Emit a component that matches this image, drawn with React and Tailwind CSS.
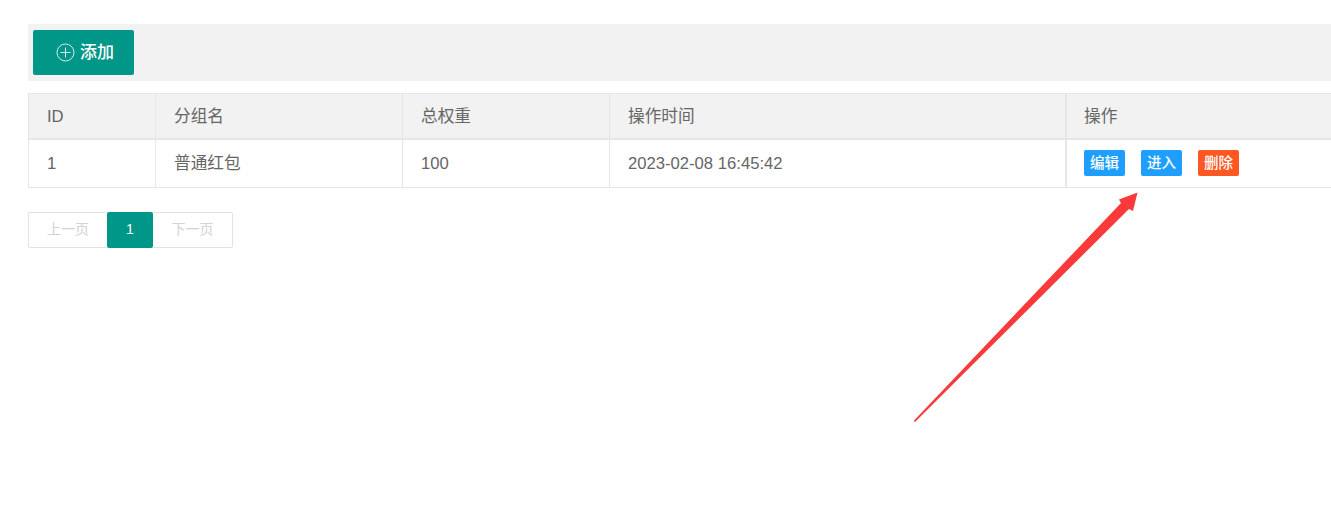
const cell = "border-r border-[#e6e6e6] px-[18px] pt-[2px]";

const App = () => {
  return (
    <div className="relative h-[511px] w-[1331px] overflow-hidden bg-white pl-[28px] pt-[24px] font-['Liberation_Sans','Noto_Sans_CJK_SC',sans-serif] text-[#666]">
      {/* Toolbar */}
      <div className="flex h-[57px] items-start bg-[#f2f2f2] pl-[5px] pt-[6px]">
        <button className="flex h-[45px] w-[101px] items-center justify-center gap-[5px] rounded-[2px] bg-[#009688] pl-[3px] text-[17px] font-medium text-white">
          <svg width="19" height="19" viewBox="0 0 19 19" fill="none" stroke="currentColor" strokeWidth="1" opacity="0.85">
            <circle cx="9.5" cy="9.5" r="8.5" />
            <path d="M9.5 4.5v10M4.5 9.5h10" />
          </svg>
          添加
        </button>
      </div>

      {/* Table */}
      <div className="mt-[12px] border-y border-l border-[#e6e6e6] text-[16.65px]">
        <div className="flex h-[46px] items-center border-b-2 border-[#e6e6e6] bg-[#f2f2f2]">
          <div className={`${cell} flex h-full w-[127px] items-center`}>ID</div>
          <div className={`${cell} flex h-full w-[247px] items-center`}>分组名</div>
          <div className={`${cell} flex h-full w-[207px] items-center`}>总权重</div>
          <div className={`${cell} flex h-full w-[457px] items-center border-r-2`}>操作时间</div>
          <div className="flex h-full flex-1 items-center px-[17px] pt-[2px]">操作</div>
        </div>
        <div className="flex h-[47px] items-center">
          <div className={`${cell} flex h-full w-[127px] items-center`}>1</div>
          <div className={`${cell} flex h-full w-[247px] items-center`}>普通红包</div>
          <div className={`${cell} flex h-full w-[207px] items-center`}>100</div>
          <div className={`${cell} flex h-full w-[457px] items-center border-r-2`}>2023-02-08 16:45:42</div>
          <div className="flex h-full flex-1 items-center gap-[16px] px-[17px] pb-[2px] text-[14.5px] font-medium text-white">
            <span className="flex h-[26px] w-[41px] items-center justify-center rounded-[2px] bg-[#1e9fff] pt-[2px]">编辑</span>
            <span className="flex h-[26px] w-[41px] items-center justify-center rounded-[2px] bg-[#1e9fff] pt-[2px]">进入</span>
            <span className="flex h-[26px] w-[41px] items-center justify-center rounded-[2px] bg-[#ff5722] pt-[2px]">删除</span>
          </div>
        </div>
      </div>

      {/* Pagination */}
      <div className="mt-[24px] flex h-[36px] w-[205px] text-[14px] text-[#d2d2d2]">
        <span className="flex w-[79px] items-center justify-center rounded-l-[2px] border-y border-l border-[#e2e2e2] pb-[2px]">上一页</span>
        <span className="flex w-[46px] items-center justify-center rounded-[2px] bg-[#009688] pb-[2px] text-white">1</span>
        <span className="flex w-[80px] items-center justify-center rounded-r-[2px] border-y border-r border-[#e2e2e2] pb-[2px]">下一页</span>
      </div>

      {/* Annotation arrow */}
      <svg className="absolute left-[905px] top-[185px]" width="240" height="240" viewBox="905 185 240 240">
        <path d="M913.8 420.8 L1121 203 L1119 199.5 L1137.5 192.5 L1133 211 L1129 209 L915 422 Z" fill="#f83a3a" />
      </svg>
    </div>
  );
};

export default App;
